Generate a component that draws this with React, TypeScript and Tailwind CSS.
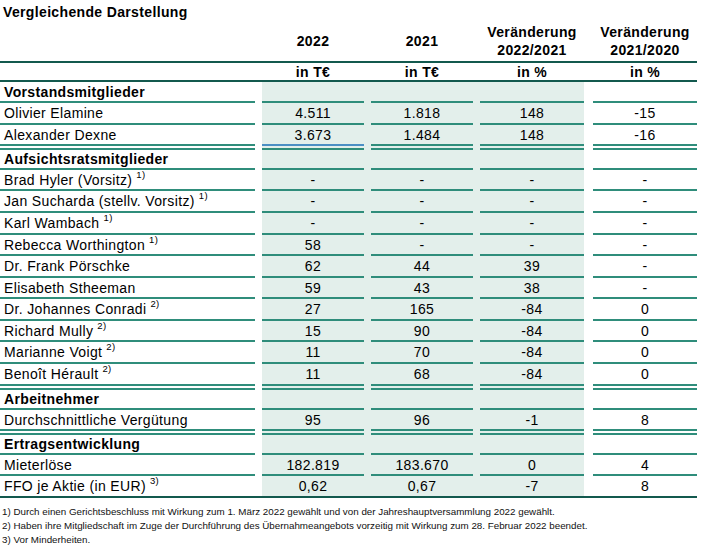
import React from "react";

type RowData = {
  label: string;
  sup?: string;
  values?: [string, string, string, string];
  section?: boolean;
  gapBefore?: boolean;
  tall?: boolean;
};

const rows: RowData[] = [
  { label: "Vorstandsmitglieder", section: true },
  { label: "Olivier Elamine", values: ["4.511", "1.818", "148", "-15"], tall: true },
  { label: "Alexander Dexne", values: ["3.673", "1.484", "148", "-16"] },
  { label: "Aufsichtsratsmitglieder", section: true, gapBefore: true },
  { label: "Brad Hyler (Vorsitz)", sup: "1)", values: ["-", "-", "-", "-"] },
  { label: "Jan Sucharda (stellv. Vorsitz)", sup: "1)", values: ["-", "-", "-", "-"], tall: true },
  { label: "Karl Wambach", sup: "1)", values: ["-", "-", "-", "-"], tall: true },
  { label: "Rebecca Worthington", sup: "1)", values: ["58", "-", "-", "-"] },
  { label: "Dr. Frank Pörschke", values: ["62", "44", "39", "-"], tall: true },
  { label: "Elisabeth Stheeman", values: ["59", "43", "38", "-"] },
  { label: "Dr. Johannes Conradi", sup: "2)", values: ["27", "165", "-84", "0"], tall: true },
  { label: "Richard Mully", sup: "2)", values: ["15", "90", "-84", "0"] },
  { label: "Marianne Voigt", sup: "2)", values: ["11", "70", "-84", "0"], tall: true },
  { label: "Benoît Hérault", sup: "2)", values: ["11", "68", "-84", "0"], tall: true },
  { label: "Arbeitnehmer", section: true, gapBefore: true },
  { label: "Durchschnittliche Vergütung", values: ["95", "96", "-1", "8"] },
  { label: "Ertragsentwicklung", section: true, gapBefore: true },
  { label: "Mieterlöse", values: ["182.819", "183.670", "0", "4"] },
];

const line = "border-b-2 border-[#2f8d7b]";

function Cell({ children, className = "" }: { children?: React.ReactNode; className?: string }) {
  return <div className={`flex items-center justify-center ${line} ${className}`}>{children}</div>;
}

function TableRow({ row }: { row: RowData }) {
  const v = row.values ?? ["", "", "", ""];
  const top = row.gapBefore ? "mt-[2px] border-t-2 border-t-[#2f8d7b]" : "";
  const height = row.gapBefore ? "h-[24px]" : row.tall ? "h-[22px]" : "h-[21px]";
  const blue = row.label === "Alexander Dexne" ? "border-b-[#4b8fc4]" : "";
  return (
    <div className={`flex ${height}`}>
      <Cell className={`w-[255px] justify-start pl-[4px] ${top} ${row.section ? "font-bold" : ""}`}>
        {row.label}
        {row.sup && <sup className="ml-[4px] text-[9.5px]">{row.sup}</sup>}
      </Cell>
      <div className="ml-[7px] flex gap-[7px] bg-[#e3efeb]">
        <Cell className={`w-[102px] ${top} ${blue}`}>{v[0]}</Cell>
        <Cell className={`w-[102px] ${top}`}>{v[1]}</Cell>
        <Cell className={`w-[104px] ${top}`}>{v[2]}</Cell>
      </div>
      <Cell className={`ml-[9px] w-[104px] ${top}`}>{v[3]}</Cell>
    </div>
  );
}

export default function App() {
  return (
    <div className="w-[702px] h-[549px] bg-white text-black font-['Liberation_Sans',Arial,sans-serif] text-[14px] tracking-[0.35px] leading-none">
      <div className="w-[697px]">
        <div className="h-[24px] pl-[3px] flex items-center font-bold">Vergleichende Darstellung</div>

        <div className="flex h-[39px] border-b-2 border-[#13594e] font-bold text-center leading-[18px] pb-[3px]">
          <div className="w-[255px]" />
          <div className="ml-[7px] w-[102px] flex items-center justify-center">2022</div>
          <div className="ml-[7px] w-[102px] flex items-center justify-center">2021</div>
          <div className="ml-[7px] w-[104px] flex items-center justify-center">
            Veränderung
            <br />
            2022/2021
          </div>
          <div className="ml-[9px] w-[104px] flex items-center justify-center">
            Veränderung
            <br />
            2021/2020
          </div>
        </div>

        <div className="flex h-[19px] border-b-2 border-[#13594e] font-bold">
          <div className="w-[255px]" />
          <div className="ml-[7px] w-[102px] flex items-center justify-center">in T€</div>
          <div className="ml-[7px] w-[102px] flex items-center justify-center">in T€</div>
          <div className="ml-[7px] w-[104px] flex items-center justify-center">in %</div>
          <div className="ml-[9px] w-[104px] flex items-center justify-center">in %</div>
        </div>

        {rows.map((r) => (
          <TableRow key={r.label} row={r} />
        ))}

        {/* last row closes with one continuous dark rule */}
        <div className="flex h-[22px] border-b-2 border-[#13594e]">
          <div className="w-[255px] pl-[4px] flex items-center">
            FFO je Aktie (in EUR)
            <sup className="ml-[4px] text-[9.5px]">3)</sup>
          </div>
          <div className="ml-[7px] flex gap-[7px] bg-[#e3efeb]">
            <div className="w-[102px] flex items-center justify-center">0,62</div>
            <div className="w-[102px] flex items-center justify-center">0,67</div>
            <div className="w-[104px] flex items-center justify-center">-7</div>
          </div>
          <div className="ml-[9px] w-[104px] flex items-center justify-center">8</div>
        </div>

        <div className="pt-[7px] pl-[2px] text-[9.8px] leading-[14px] tracking-normal text-[#111]">
          <p>1) Durch einen Gerichtsbeschluss mit Wirkung zum 1. März 2022 gewählt und von der Jahreshauptversammlung 2022 gewählt.</p>
          <p>2) Haben ihre Mitgliedschaft im Zuge der Durchführung des Übernahmeangebots vorzeitig mit Wirkung zum 28. Februar 2022 beendet.</p>
          <p>3) Vor Minderheiten.</p>
        </div>
      </div>
    </div>
  );
}
